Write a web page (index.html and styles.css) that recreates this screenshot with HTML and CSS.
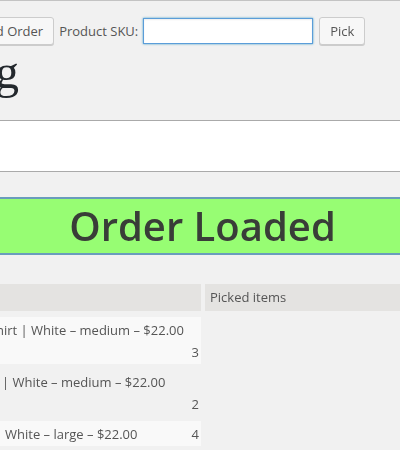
FILE: index.html
```html
<!DOCTYPE html>
<html lang="en">
<head>
    <meta charset="UTF-8">
    <meta name="viewport" content="width=device-width, initial-scale=1.0">
    <title>Order Picking</title>
    <link rel="stylesheet" href="styles.css">
</head>
<body>
    <div class="wrap">
        <div class="toolbar">
            <button class="button">Load Order</button>
            <label for="sku">Product SKU:</label>
            <input type="text" id="sku" class="sku-input" autofocus>
            <button class="button">Pick</button>
        </div>

        <div class="title-box">
            <h1>Order Picking</h1>
        </div>

        <div class="notes"></div>

        <div class="notice">Order Loaded</div>

        <div class="picklist">
            <div class="head"></div>
            <div class="head">Picked items</div>

            <div class="item item-light wrap-qty">
                <span class="item-name cut-1">hirt | White – medium – $22.00</span>
                <span class="item-qty">3</span>
            </div>
            <div class="picked"></div>

            <div class="item wrap-qty">
                <span class="item-name cut-2">| White – medium – $22.00</span>
                <span class="item-qty">2</span>
            </div>
            <div class="picked"></div>

            <div class="item item-light">
                <span class="item-name cut-3">White – large – $22.00</span>
                <span class="item-qty">4</span>
            </div>
            <div class="picked"></div>
        </div>
    </div>
</body>
</html>
```

FILE: styles.css
```css
body {
    margin: 0;
    background-color: #f1f1f1;
    font-family: "Open Sans", sans-serif;
    font-size: 13px;
    color: #555;
    overflow: hidden;
}
.wrap {
    border-top: 1px solid #c3c3c3;
    padding-top: 16px;
}
.toolbar {
    display: flex;
    align-items: center;
    margin-left: -37px;
}
.button {
    height: 28px;
    padding: 0 10px 1px;
    background-color: #f7f7f7;
    border: 1px solid #ccc;
    border-radius: 3px;
    box-shadow: 0 1px 0 #ccc;
    font-family: "Open Sans", sans-serif;
    font-size: 13px;
    color: #555;
}
.toolbar label {
    margin: 0 5px 0 5px;
}
.sku-input {
    width: 170px;
    height: 26px;
    box-sizing: border-box;
    margin-right: 6px;
    padding: 0 5px;
    border: 1px solid #5b9dd9;
    box-shadow: 0 0 2px rgba(30,140,190,0.8), inset 0 1px 2px rgba(0,0,0,0.07);
    background: #fff;
    font-family: "Open Sans", sans-serif;
    font-size: 14px;
    outline: none;
}
.title-box {
    margin-left: -400px;
    width: 419px;
    text-align: right;
}
h1 {
    margin: -1px 0 20px;
    font-family: "Liberation Serif", serif;
    font-weight: normal;
    font-size: 48px;
    line-height: 56px;
    color: #23282d;
}
.notes {
    height: 50px;
    background: #fff;
    border-top: 1px solid #aaa;
    border-bottom: 1px solid #aaa;
    margin-bottom: 25px;
}
.notice {
    height: 54px;
    line-height: 54px;
    border-top: 2px solid #6a9cbc;
    border-bottom: 2px solid #6a9cbc;
    background-color: #97fd73;
    text-align: center;
    padding-left: 5px;
    font-size: 40px;
    font-weight: 600;
    color: #393d38;
    margin-bottom: 29px;
}
.picklist {
    display: grid;
    grid-template-columns: 201px 1fr;
    column-gap: 4px;
    row-gap: 5px;
}
.head {
    height: 27px;
    line-height: 27px;
    padding-left: 5px;
    background-color: #e4e3e1;
    margin-bottom: 1px;
}
.item {
    display: flex;
    flex-wrap: wrap;
    padding: 2px 2px 1px 0;
    line-height: 22px;
}
.item-light {
    background-color: #f9f9f9;
}
.wrap-qty .item-name {
    flex: 1 0 100%;
}
.item-name {
    white-space: nowrap;
}
.item-qty {
    margin-left: auto;
}
.cut-1 { text-indent: -4px; }
.cut-2 { text-indent: 2px; }
.cut-3 { text-indent: 5px; }
```
